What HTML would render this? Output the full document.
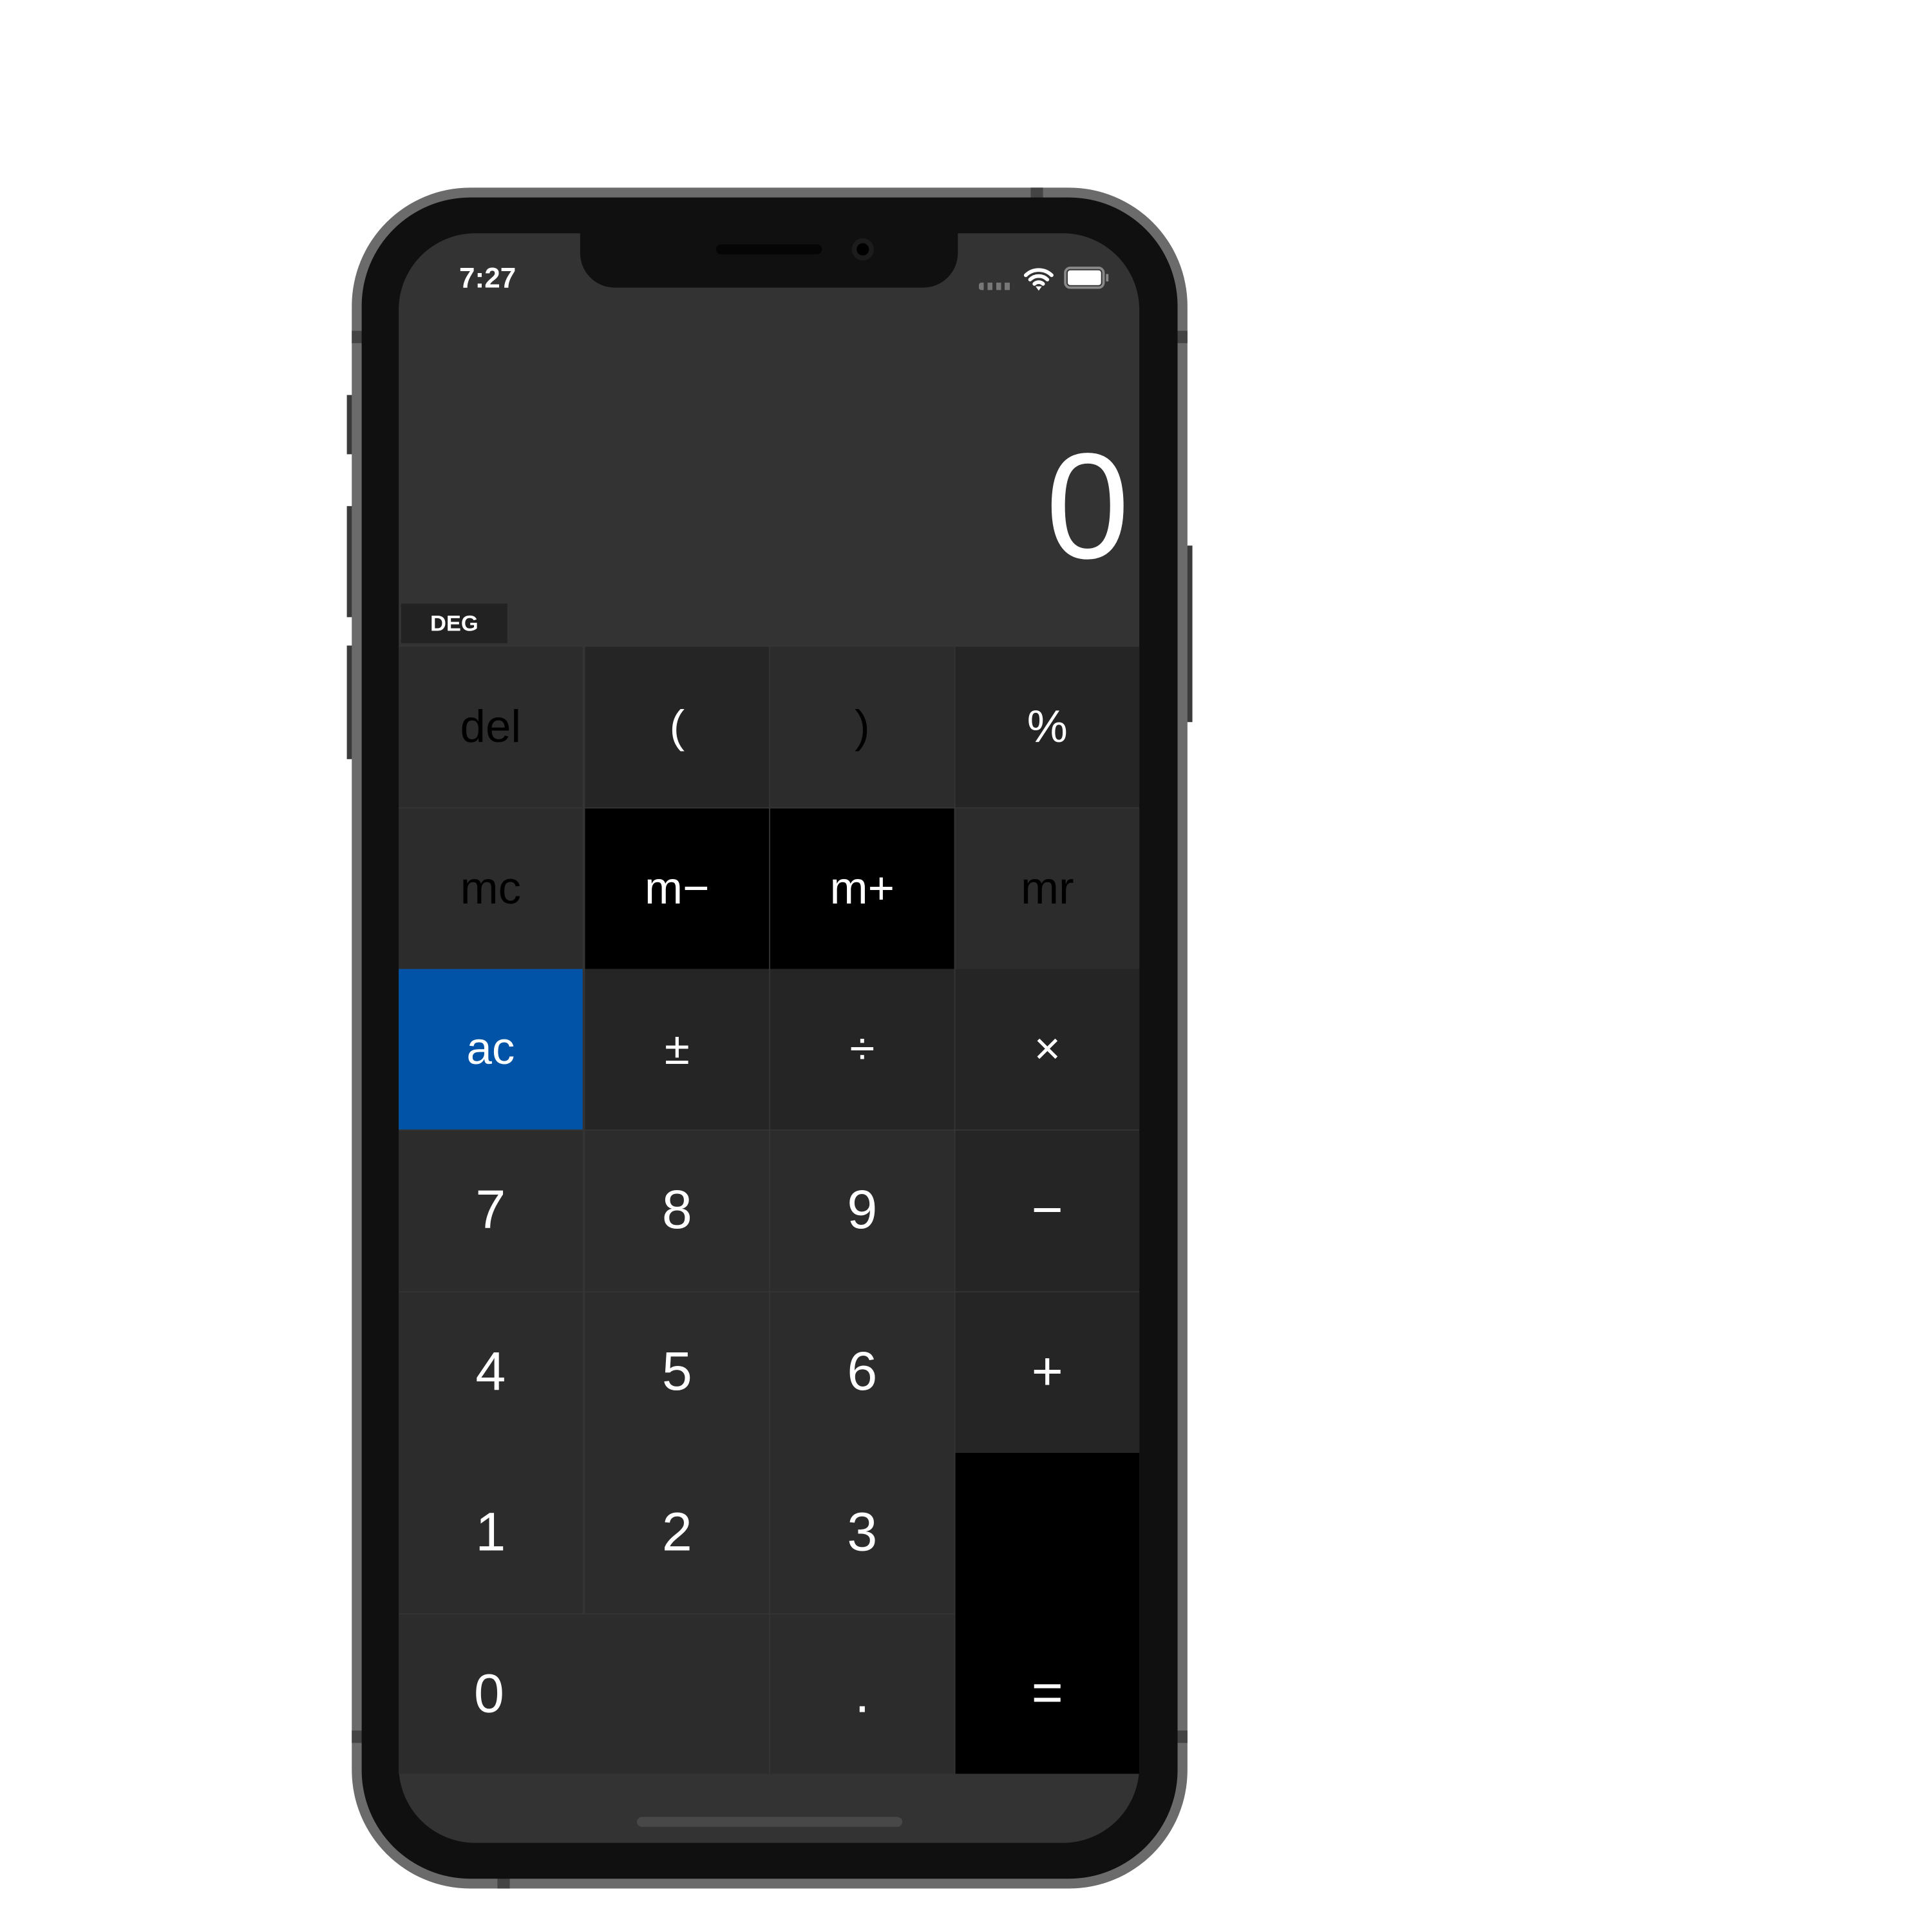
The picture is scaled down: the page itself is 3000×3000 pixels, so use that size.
<!DOCTYPE html>
<html><head><meta charset="utf-8"><style>
html,body{margin:0;padding:0;background:#fff;width:3000px;height:3000px;overflow:hidden}
#w{position:absolute;left:0;top:0;width:1552px;height:1552px;transform:scale(1.9167);transform-origin:0 0;font-family:"Liberation Sans",sans-serif}
.a{position:absolute}
.k{position:absolute;width:149px;height:130px;display:flex;align-items:center;justify-content:center;color:#fff;font-size:37px;box-sizing:border-box}
.d{background:#2c2c2c}.o{background:#252525}.b{background:#000}
.n{font-size:44px}
</style></head><body><div id="w">
<div class="a" style="left:281px;top:320px;width:6px;height:48px;background:#3a3a3a"></div>
<div class="a" style="left:281px;top:410px;width:6px;height:90px;background:#3a3a3a"></div>
<div class="a" style="left:281px;top:523px;width:6px;height:92px;background:#3a3a3a"></div>
<div class="a" style="left:960px;top:442px;width:6px;height:143px;background:#3a3a3a"></div>
<div class="a" style="left:285px;top:152px;width:677px;height:1378px;background:#6b6b6b;border-radius:96px"></div>
<div class="a" style="left:285px;top:268px;width:677px;height:10px;background:#444"></div>
<div class="a" style="left:285px;top:1402px;width:677px;height:10px;background:#444"></div>
<div class="a" style="left:835px;top:152px;width:10px;height:10px;background:#444"></div>
<div class="a" style="left:403px;top:1520px;width:10px;height:10px;background:#444"></div>
<div class="a" style="left:293px;top:160px;width:661px;height:1362px;background:#101010;border-radius:88px"></div>
<div class="a" style="left:323px;top:189px;width:600px;height:1304px;background:#333;border-radius:62px;overflow:hidden"></div>
<div class="a" style="left:470px;top:185px;width:306px;height:48px;background:#101010;border-radius:0 0 28px 28px"></div>
<div class="a" style="left:580px;top:198px;width:86px;height:8px;background:#050505;border-radius:4px"></div>
<div class="a" style="left:690px;top:193px;width:18px;height:18px;background:#1c1c1c;border-radius:50%"></div>
<div class="a" style="left:694px;top:197px;width:10px;height:10px;background:#000;border-radius:50%"></div>
<div class="a" style="left:372px;top:212px;color:#fff;font-size:23px;font-weight:bold">7:27</div>
<div class="a" style="left:793px;top:229px;width:28px;height:6px;background:repeating-linear-gradient(90deg,#777 0 4px,transparent 4px 7px);border-radius:2px"></div>
<svg class="a" style="left:829px;top:215px" width="25" height="22" viewBox="0 0 25 22"><path d="M2 8a15 15 0 0 1 21 0M5.5 11.5a10 10 0 0 1 14 0M9 15a5 5 0 0 1 7 0" stroke="#fff" stroke-width="3" fill="none" stroke-linecap="round"/><path d="M10 17l2.5 3.5 2.5-3.5z" fill="#fff"/></svg>
<div class="a" style="left:862px;top:216px;width:33px;height:18px;border:2px solid #888;border-radius:5px;box-sizing:border-box"></div>
<div class="a" style="left:865px;top:219px;width:27px;height:12px;background:#fff;border-radius:2px"></div>
<div class="a" style="left:896px;top:222px;width:2px;height:6px;background:#888"></div>
<div class="a" style="right:637px;top:340px;color:#fff;font-size:122px;font-weight:300;line-height:140px">0</div>
<div class="a" style="left:325px;top:489px;width:86px;height:32px;background:#222;color:#fff;font-size:18px;font-weight:bold;display:flex;align-items:center;justify-content:center">DEG</div>
<div class="a" style="left:323px;top:523px;width:600px;height:914px;background:#343434"></div>
<div class="k d" style="left:323px;top:524px;color:#000">del</div>
<div class="k o" style="left:474px;top:524px">(</div>
<div class="k d" style="left:624px;top:524px;color:#000">)</div>
<div class="k o" style="left:774px;top:524px">%</div>
<div class="k d" style="left:323px;top:655px;color:#000">mc</div>
<div class="k b" style="left:474px;top:655px">m−</div>
<div class="k b" style="left:624px;top:655px">m+</div>
<div class="k d" style="left:774px;top:655px;color:#000">mr</div>
<div class="k" style="left:323px;top:785px;background:#0053a6">ac</div>
<div class="k o" style="left:474px;top:785px">±</div>
<div class="k o" style="left:624px;top:785px">÷</div>
<div class="k o" style="left:774px;top:785px">×</div>
<div class="k d n" style="left:323px;top:916px">7</div>
<div class="k d n" style="left:474px;top:916px">8</div>
<div class="k d n" style="left:624px;top:916px">9</div>
<div class="k o n" style="left:774px;top:916px">−</div>
<div class="k d n" style="left:323px;top:1047px">4</div>
<div class="k d n" style="left:474px;top:1047px">5</div>
<div class="k d n" style="left:624px;top:1047px">6</div>
<div class="k o n" style="left:774px;top:1047px">+</div>
<div class="k d n" style="left:323px;top:1177px">1</div>
<div class="k d n" style="left:474px;top:1177px">2</div>
<div class="k d n" style="left:624px;top:1177px">3</div>
<div class="k b n" style="left:774px;top:1177px;height:260px;padding-top:130px">=</div>
<div class="k d n" style="left:323px;top:1308px;width:300px;height:129px;justify-content:flex-start;padding-left:61px">0</div>
<div class="k d n" style="left:624px;top:1308px;height:129px">.</div>
<div class="a" style="left:516px;top:1472px;width:215px;height:8px;background:#484848;border-radius:4px"></div>
</div></body></html>
